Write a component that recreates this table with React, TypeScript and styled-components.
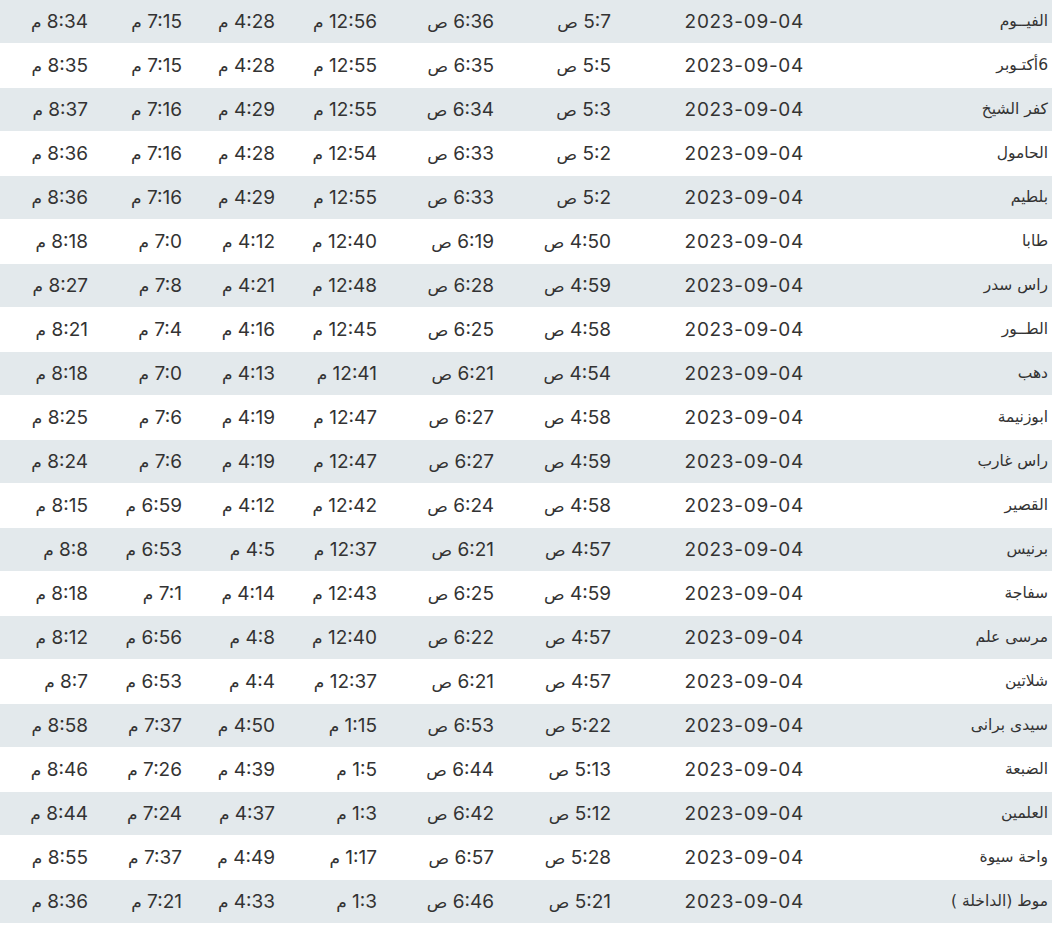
import React from 'react'
import styled, { createGlobalStyle } from 'styled-components'

const GlobalStyle = createGlobalStyle`
  body {
    margin: 0;
    background: #fff;
    font-family: Inter, 'DejaVu Sans', sans-serif;
    color: #333;
  }
`

type Row = {
  city: string
  fajr: string
  sunrise: string
  dhuhr: string
  asr: string
  maghrib: string
  isha: string
}

const DATE = '2023-09-04'

const rows: Row[] = [
  { city: 'الفيــوم', fajr: '5:7', sunrise: '6:36', dhuhr: '12:56', asr: '4:28', maghrib: '7:15', isha: '8:34' },
  { city: '6أكتـوبر', fajr: '5:5', sunrise: '6:35', dhuhr: '12:55', asr: '4:28', maghrib: '7:15', isha: '8:35' },
  { city: 'كفر الشيخ', fajr: '5:3', sunrise: '6:34', dhuhr: '12:55', asr: '4:29', maghrib: '7:16', isha: '8:37' },
  { city: 'الحامول', fajr: '5:2', sunrise: '6:33', dhuhr: '12:54', asr: '4:28', maghrib: '7:16', isha: '8:36' },
  { city: 'بلطيم', fajr: '5:2', sunrise: '6:33', dhuhr: '12:55', asr: '4:29', maghrib: '7:16', isha: '8:36' },
  { city: 'طابا', fajr: '4:50', sunrise: '6:19', dhuhr: '12:40', asr: '4:12', maghrib: '7:0', isha: '8:18' },
  { city: 'راس سدر', fajr: '4:59', sunrise: '6:28', dhuhr: '12:48', asr: '4:21', maghrib: '7:8', isha: '8:27' },
  { city: 'الطــور', fajr: '4:58', sunrise: '6:25', dhuhr: '12:45', asr: '4:16', maghrib: '7:4', isha: '8:21' },
  { city: 'دهب', fajr: '4:54', sunrise: '6:21', dhuhr: '12:41', asr: '4:13', maghrib: '7:0', isha: '8:18' },
  { city: 'ابوزنيمة', fajr: '4:58', sunrise: '6:27', dhuhr: '12:47', asr: '4:19', maghrib: '7:6', isha: '8:25' },
  { city: 'راس غارب', fajr: '4:59', sunrise: '6:27', dhuhr: '12:47', asr: '4:19', maghrib: '7:6', isha: '8:24' },
  { city: 'القصير', fajr: '4:58', sunrise: '6:24', dhuhr: '12:42', asr: '4:12', maghrib: '6:59', isha: '8:15' },
  { city: 'برنيس', fajr: '4:57', sunrise: '6:21', dhuhr: '12:37', asr: '4:5', maghrib: '6:53', isha: '8:8' },
  { city: 'سفاجة', fajr: '4:59', sunrise: '6:25', dhuhr: '12:43', asr: '4:14', maghrib: '7:1', isha: '8:18' },
  { city: 'مرسى علم', fajr: '4:57', sunrise: '6:22', dhuhr: '12:40', asr: '4:8', maghrib: '6:56', isha: '8:12' },
  { city: 'شلاتين', fajr: '4:57', sunrise: '6:21', dhuhr: '12:37', asr: '4:4', maghrib: '6:53', isha: '8:7' },
  { city: 'سيدى برانى', fajr: '5:22', sunrise: '6:53', dhuhr: '1:15', asr: '4:50', maghrib: '7:37', isha: '8:58' },
  { city: 'الضبعة', fajr: '5:13', sunrise: '6:44', dhuhr: '1:5', asr: '4:39', maghrib: '7:26', isha: '8:46' },
  { city: 'العلمين', fajr: '5:12', sunrise: '6:42', dhuhr: '1:3', asr: '4:37', maghrib: '7:24', isha: '8:44' },
  { city: 'واحة سيوة', fajr: '5:28', sunrise: '6:57', dhuhr: '1:17', asr: '4:49', maghrib: '7:37', isha: '8:55' },
  { city: 'موط (الداخلة )', fajr: '5:21', sunrise: '6:46', dhuhr: '1:3', asr: '4:33', maghrib: '7:21', isha: '8:36' },
]

const Table = styled.div`
  width: 1052px;
  direction: rtl;
`

const TableRow = styled.div<{ $shaded: boolean }>`
  display: grid;
  grid-template-columns: 245px 192px 117px 117px 102px 93px 94px 92px;
  height: 44px;
  align-items: center;
  box-sizing: border-box;
  border-bottom: 1px solid #fff;
  background: ${(p) => (p.$shaded ? '#e3e9ec' : '#fff')};
`

const Cell = styled.div`
  padding-right: 4px;
  text-align: right;
  white-space: nowrap;
  font-size: 19px;
  line-height: 1;
`

const CityCell = styled(Cell)`
  font-family: 'DejaVu Sans', sans-serif;
  font-size: 15.5px;
`

const DateCell = styled(Cell)`
  font-size: 19px;
  letter-spacing: 0.7px;
  padding-right: 3px;
`

const Suffix = styled.span`
  font-family: 'DejaVu Sans', sans-serif;
  font-size: 17px;
`

const Time: React.FC<{ value: string; pm?: boolean }> = ({ value, pm }) => (
  <Cell>
    {value} <Suffix>{pm ? 'م' : 'ص'}</Suffix>
  </Cell>
)

export default function App() {
  return (
    <>
      <GlobalStyle />
      <Table>
        {rows.map((r, i) => (
          <TableRow key={r.city} $shaded={i % 2 === 0}>
            <CityCell>{r.city}</CityCell>
            <DateCell>{DATE}</DateCell>
            <Time value={r.fajr} />
            <Time value={r.sunrise} />
            <Time value={r.dhuhr} pm />
            <Time value={r.asr} pm />
            <Time value={r.maghrib} pm />
            <Time value={r.isha} pm />
          </TableRow>
        ))}
      </Table>
    </>
  )
}
